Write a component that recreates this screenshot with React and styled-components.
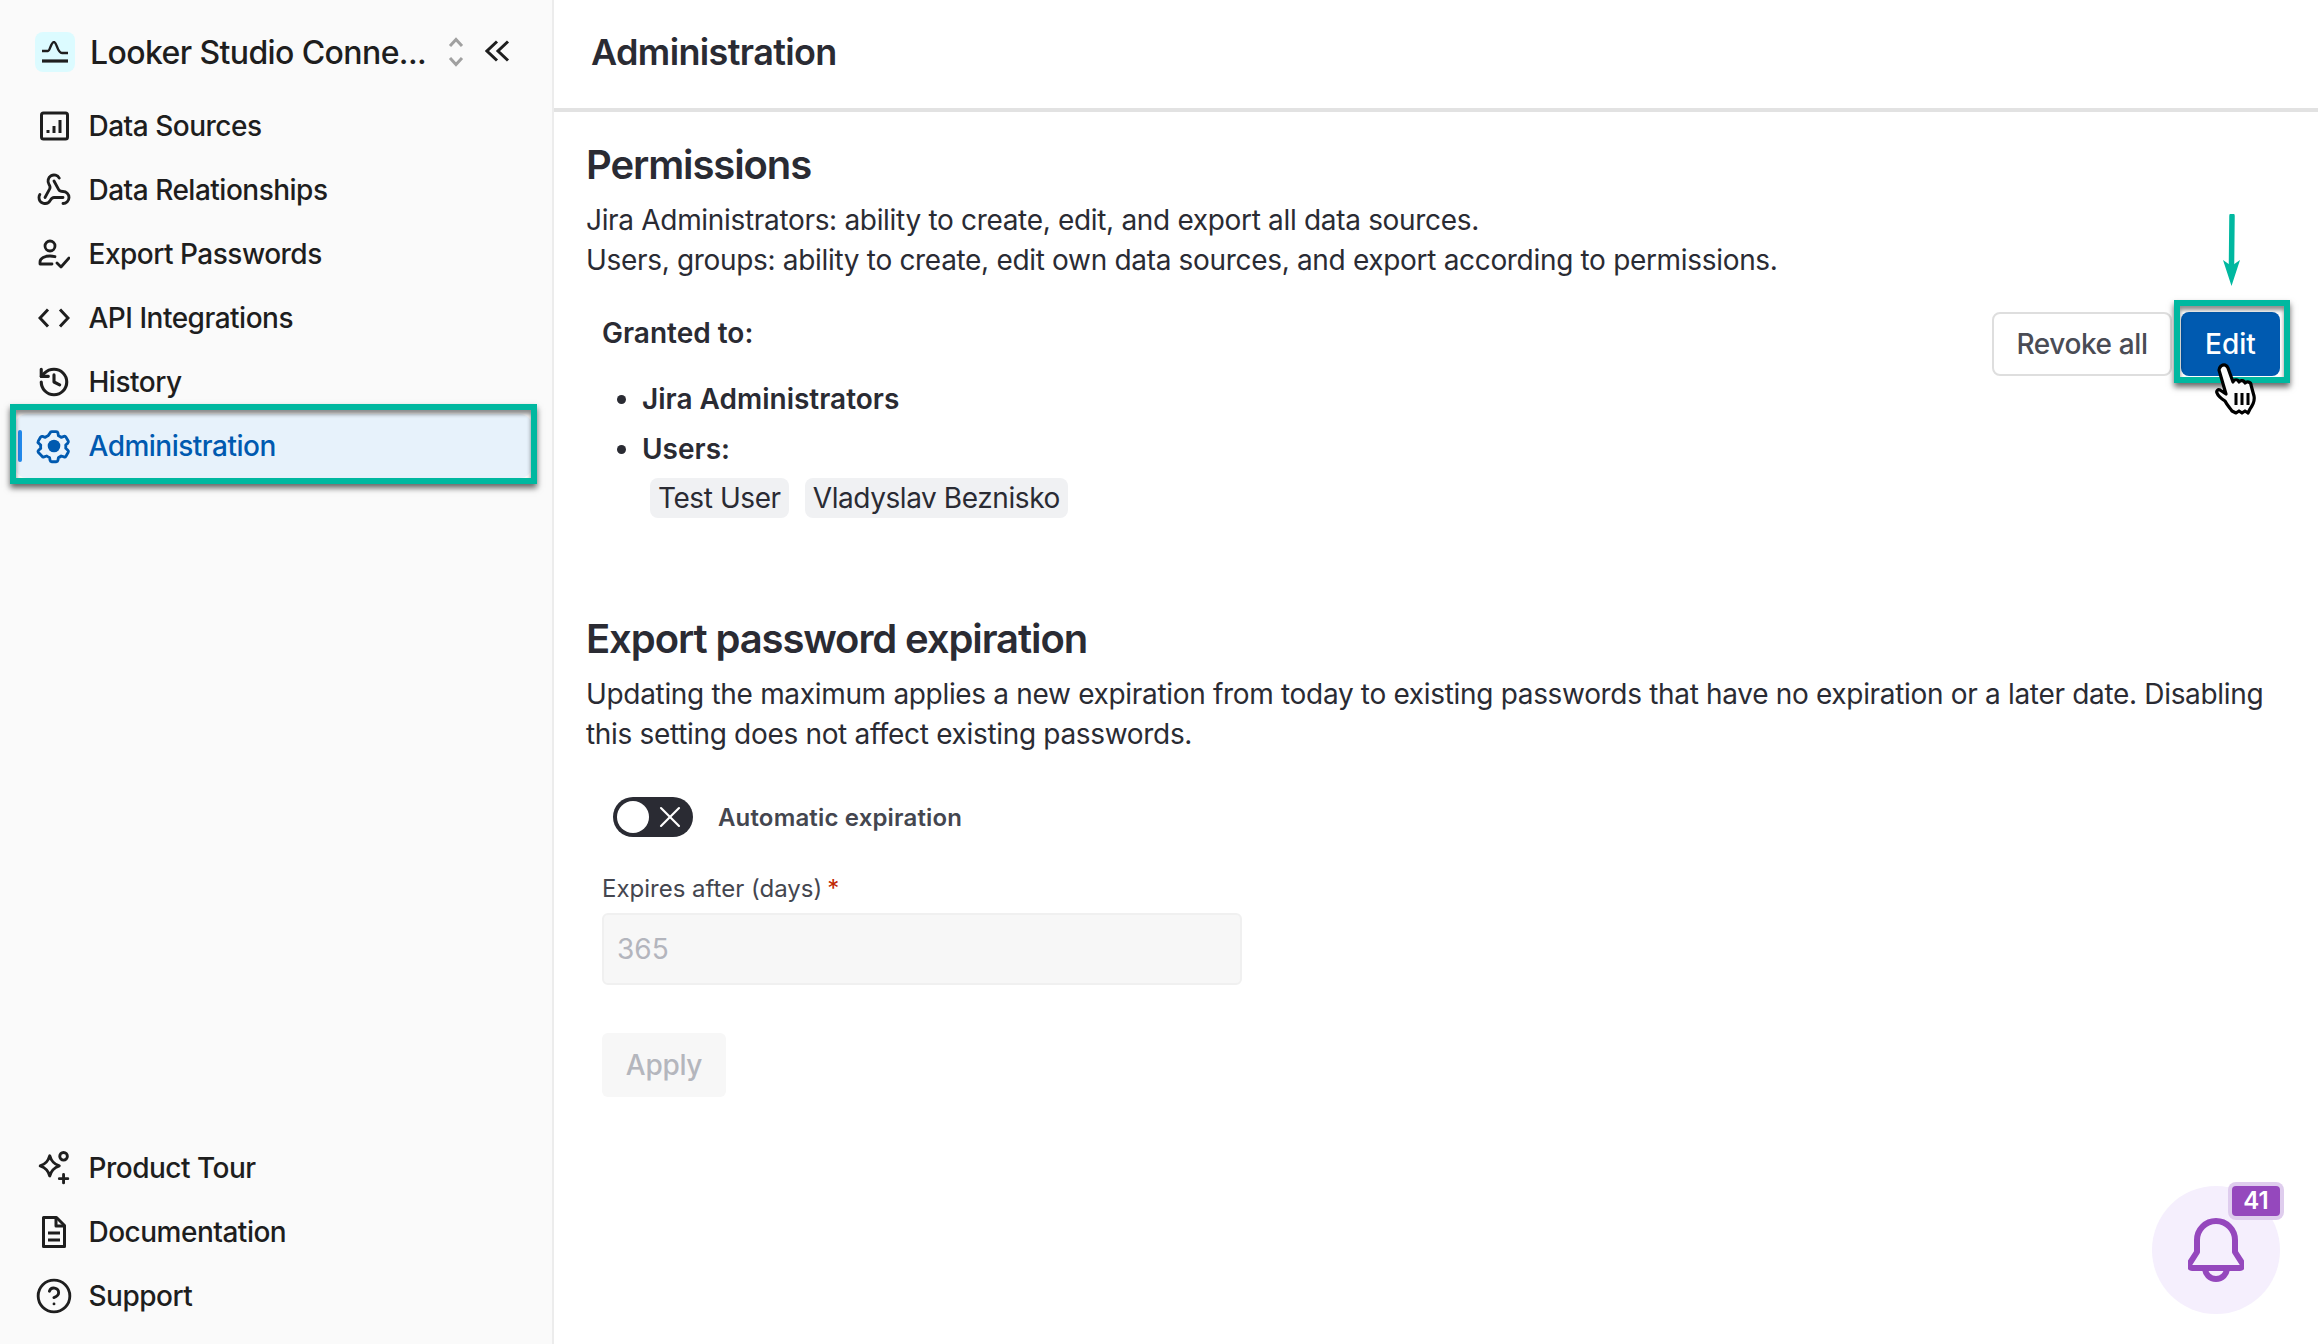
import React from 'react';
import styled, { createGlobalStyle } from 'styled-components';
import { Webhook, History, CircleHelp, X } from 'lucide-react';

const Global = createGlobalStyle`
  html, body, #root { margin: 0; height: 100%; }
  body { font-family: Inter, "Liberation Sans", sans-serif; background: #fff; overflow: hidden; }
  * { box-sizing: border-box; }
`;
const Page = styled.div`display: flex; height: 100vh; position: relative;`;
const Sidebar = styled.aside`
  width: 554px; flex: none; background: #fafafa; border-right: 2px solid #ececec;
  display: flex; flex-direction: column; padding-top: 32px; padding-bottom: 16px;
`;
const Head = styled.div`display: flex; align-items: center; height: 40px; padding-left: 35px; margin-bottom: 22px;`;
const Logo = styled.span`
  width: 40px; height: 40px; border-radius: 8px; background: #dcfbff; display: flex; align-items: center; justify-content: center; flex: none;
`;
const Project = styled.span`font-size: 32px; font-weight: 450; letter-spacing: -0.6px; color: #1e1e1e; margin-left: 15px; width: 358px; white-space: nowrap;`;
const Updown = styled.svg`flex: none; margin-right: 21px; color: #a0a0a0;`;
const Collapse = styled.svg`flex: none; color: #1e1e1e; margin-top: -2px;`;
const Nav = styled.nav`display: flex; flex-direction: column; padding: 0 20px 0 15px;`;
const BottomNav = styled(Nav)`margin-top: auto;`;
const Row = styled.div`
  height: 64px; display: flex; align-items: center; padding-left: 23px; gap: 18.500px; position: relative; font-size: 28px; font-weight: 450; letter-spacing: -0.5px; border-radius: 12px;
  color: ${p => (p.$active ? '#005ab0' : '#1e1e1e')};
  background: ${p => (p.$active ? '#e7f2fb' : 'transparent')};
`;
const ActiveBar = styled.span`position: absolute; left: 3px; top: 16px; width: 4px; height: 32px; background: #2188ea; border-radius: 2px;`;
const IconBox = styled.span`width: 32px; height: 32px; display: flex; align-items: center; justify-content: center; flex: none; svg { flex: none; }`;
const Highlight = styled.span`
  position: absolute; inset: ${p => p.$inset}; border: 6px solid #00b8a0; box-shadow: 0 4px 6px rgba(0,0,0,.6), inset 0 4px 4px rgba(0,0,0,.45); pointer-events: none; z-index: 2;
`;
const Main = styled.main`flex: 1; min-width: 0; display: flex; flex-direction: column;`;
const Top = styled.header`height: 112px; border-bottom: 4px solid #e2e2e2; padding-left: 37px; display: flex; align-items: center; padding-bottom: 5px;`;
const Title = styled.h1`margin: 0; font-size: 36px; font-weight: 600; letter-spacing: -0.63px; color: #2a2b33;`;
const Content = styled.div`padding: 28px 38px 0 32px; color: #2a2b33;`;
const H2 = styled.h2`margin: 0; font-size: 40px; line-height: 50px; font-weight: 600; color: #2a2b33; letter-spacing: -1.1px;`;
const Para = styled.p`margin: 10px 0 0; font-size: 28px; line-height: 40px; letter-spacing: -0.32px;`;
const Granted = styled.div`display: flex; justify-content: space-between; padding-left: 16px; margin-top: 33px; height: 301px;`;
const Label = styled.div`font-size: 28px; font-weight: 600; line-height: 40px;`;
const List = styled.ul`margin: 26px 0 0; padding: 0 0 0 40px; font-size: 28px; font-weight: 600;`;
const Item = styled.li`line-height: 40px; margin-bottom: 10px;`;
const Chips = styled.div`display: flex; gap: 16px; margin: -1px 0 0 48px;`;
const Chip = styled.span`height: 40px; padding: 0 8px; background: #f0f1f3; border-radius: 8px; font-size: 28px; line-height: 40px; letter-spacing: -0.42px;`;
const Actions = styled.div`display: flex; gap: 9px; margin-top: -1px;`;
const Revoke = styled.button`
  width: 180px; height: 64px; background: #fff; border: 2px solid #dedede; border-radius: 8px; font: 500 28px Inter, sans-serif; letter-spacing: -0.4px; color: #4a4c55; padding: 0;
`;
const EditWrap = styled.div`position: relative; width: 99px; height: 64px;`;
const Edit = styled.button`
  width: 99px; height: 64px; background: #005ab0; border: 0; border-radius: 8px; font: 500 28px Inter, sans-serif; color: #fff; padding: 0;
`;
const Arrow = styled.svg`position: absolute; left: 41px; top: -98px; z-index: 3;`;
const Hand = styled.svg`position: absolute; left: 33px; top: 51px; z-index: 4;`;
const Toggle = styled.div`display: flex; align-items: center; gap: 25px; margin: 43px 0 0 27px;`;
const Switch = styled.span`width: 80px; height: 40px; border-radius: 20px; background: #2a2b33; display: flex; align-items: center; padding-left: 4px; gap: 3px; color: #fff;`;
const Knob = styled.span`width: 32px; height: 32px; border-radius: 50%; background: #fff;`;
const ToggleLabel = styled.span`font-size: 24px; font-weight: 600; letter-spacing: 0.16px; color: #44464f;`;
const Form = styled.div`padding-left: 16px; margin-top: 32px;`;
const FieldLabel = styled.div`font-size: 24px; line-height: 40px; color: #44464f; display: flex; gap: 5px;`;
const Required = styled.span`color: #bf2600;`;
const Input = styled.div`
  width: 640px; height: 72px; margin-top: 4px; background: #f7f7f7; border: 2px solid #f0f0f0; border-radius: 6px; font-size: 28px; color: #b3b5bd; display: flex; align-items: center; padding-left: 13px;
`;
const Apply = styled.button`
  display: block; margin-top: 48px; width: 124px; height: 64px; background: #f7f7f7; border: 0; border-radius: 6px; font: 500 28px Inter, sans-serif; letter-spacing: -0.3px; color: #b4b6bd; padding: 0;
`;
const Bell = styled.div`
  position: absolute; right: 38px; bottom: 30px; width: 128px; height: 128px; border-radius: 50%; background: #f5effd; display: flex; align-items: center; justify-content: center;
`;
const Badge = styled.span`
  position: absolute; right: 0; top: 0; width: 48px; height: 30px; background: #9548bd; color: #fff; border-radius: 4px; font-size: 24px; font-weight: 600; line-height: 30px; text-align: center; box-shadow: 0 0 0 4px #dfcdee;
`;

const S = { fill: 'none', stroke: 'currentColor', strokeWidth: 3, strokeLinecap: 'round', strokeLinejoin: 'round' };
const Bars = () => (
  <svg width="32" height="32" viewBox="0 0 32 32" {...S}>
    <rect x="3.500" y="3" width="26" height="26" rx="2" />
    <path d="M10 23v-3M16 23v-7M22 23V10" strokeLinecap="butt" strokeWidth="3" />
  </svg>
);
const UserCheck = () => (
  <svg width="32" height="32" viewBox="0 0 32 32" {...S} strokeWidth="2.800">
    <circle cx="12" cy="8" r="5" />
    <path d="M2 26v-2c0-4 5-6 10-6 2 0 3 .2 5 .7M2 26h12" />
    <path d="M19 25l4 4 8-9" />
  </svg>
);
const Angles = () => (
  <svg width="32" height="20" viewBox="0 0 32 20" {...S} strokeLinecap="butt" strokeLinejoin="miter">
    <path d="M10 1.500L2 10l8 8.500M22 1.500l8 8.500-8 8.500" />
  </svg>
);
const Gear = () => (
  <svg width="40" height="40" viewBox="0 0 24 24" fill="none" stroke="currentColor" strokeWidth="1.700" strokeLinecap="round" strokeLinejoin="round">
    <path d="M9.67 4.140a1 1 0 0 1 .98-.8h2.700a1 1 0 0 1 .98.8l.34 1.700c.6.25 1.160.57 1.670.96l1.640-.56a1 1 0 0 1 1.190.45l1.350 2.340a1 1 0 0 1-.2 1.250l-1.300 1.150a7 7 0 0 1 0 1.940l1.300 1.150a1 1 0 0 1 .2 1.250l-1.350 2.340a1 1 0 0 1-1.190.45l-1.640-.56c-.51.39-1.070.71-1.670.96l-.34 1.700a1 1 0 0 1-.98.8h-2.700a1 1 0 0 1-.98-.8l-.34-1.700a7 7 0 0 1-1.670-.96l-1.640.56a1 1 0 0 1-1.190-.45L2.540 15.800a1 1 0 0 1 .2-1.250l1.300-1.150a7 7 0 0 1 0-1.940l-1.300-1.150a1 1 0 0 1-.2-1.250l1.350-2.340a1 1 0 0 1 1.190-.45l1.640.56c.51-.39 1.070-.71 1.670-.96z" />
    <circle cx="12" cy="12" r="3.800" fill="currentColor" stroke="none" />
  </svg>
);
const Sparkle = () => (
  <svg width="34" height="34" viewBox="0 0 32 32" {...S} strokeWidth="2.700">
    <path d="M13 4c1.500 5 3.500 7.500 9 9.500-5.500 2-7.500 4.500-9 9.500-1.500-5-3.500-7.500-9-9.500 5.500-2 7.500-4.500 9-9.500z" transform="translate(-1 .5)" />
    <circle cx="25" cy="5" r="3.600" />
    <path d="M25 22v8M21 26h8" />
  </svg>
);
const Doc = () => (
  <svg width="32" height="34" viewBox="0 0 32 34" {...S} strokeLinecap="butt">
    <path d="M5.500 2.500h13l8 8v21h-21z" />
    <path d="M10 18h12M10 25h12" strokeWidth="3" />
    <path d="M18 2.500v8.500h8" />
  </svg>
);
const HandIcon = () => (
  <Hand width="44" height="52" viewBox="0 0 44 52">
    <path d="M7 3c3-2 6-1 7 2l5 14c1-3 5-3 6 0 1-2 5-2 6 1 2-2 6-1 6 2l3 11c1 5-1 9-4 13l-2 4-3-2-3 2-3-2-3 2-4-2c-2-3-5-6-7-10-3-2-7-5-8-8-1-2 1-4 3-3l6 4L5 7c0-2 1-3 2-4z" fill="#fbfbfb" stroke="#000" strokeWidth="3.200" strokeLinejoin="round" />
    <path d="M22 30v12M28 30v12M34 30v12" stroke="#000" strokeWidth="3" />
  </Hand>
);

export default function App() {
  return (
    <Page>
      <Global />
      <Sidebar>
        <Head>
          <Logo>
            <svg width="28" height="22" viewBox="0 0 28 22" fill="none" stroke="#1e1e1e">
              <path d="M1 10h6c2 0 3-9 6-9 3 0 3 11 8 11h6" strokeWidth="2.400" />
              <path d="M1 20h26" strokeWidth="3.200" />
            </svg>
          </Logo>
          <Project>Looker Studio Conne...</Project>
          <Updown width="16" height="30" viewBox="0 0 16 30" fill="none" stroke="currentColor" strokeWidth="3">
            <path d="M2 9l6-6.500L14 9M2 21l6 6.500 6-6.500" />
          </Updown>
          <Collapse width="25" height="22" viewBox="0 0 25 22" fill="none" stroke="currentColor" strokeWidth="3">
            <path d="M12 1.500L2 11l10 9.500M23 1.500L13 11l10 9.500" />
          </Collapse>
        </Head>
        <Nav>
          <Row><IconBox><Bars /></IconBox>Data Sources</Row>
          <Row><IconBox><Webhook size={36} strokeWidth={1.900} /></IconBox>Data Relationships</Row>
          <Row><IconBox><UserCheck /></IconBox>Export Passwords</Row>
          <Row><IconBox><Angles /></IconBox>API Integrations</Row>
          <Row><IconBox><History size={34} strokeWidth={2.200} /></IconBox>History</Row>
          <Row $active>
            <ActiveBar />
            <IconBox><Gear /></IconBox>
            Administration
            <Highlight $inset="-10px -5px -6px -5px" />
          </Row>
        </Nav>
        <BottomNav>
          <Row><IconBox><Sparkle /></IconBox>Product Tour</Row>
          <Row><IconBox><Doc /></IconBox>Documentation</Row>
          <Row><IconBox><CircleHelp size={38} strokeWidth={1.800} /></IconBox>Support</Row>
        </BottomNav>
      </Sidebar>
      <Main>
        <Top><Title>Administration</Title></Top>
        <Content>
          <H2>Permissions</H2>
          <Para>
            Jira Administrators: ability to create, edit, and export all data sources.<br />
            Users, groups: ability to create, edit own data sources, and export according to permissions.
          </Para>
          <Granted>
            <div>
              <Label>Granted to:</Label>
              <List>
                <Item>Jira Administrators</Item>
                <Item>Users:</Item>
              </List>
              <Chips><Chip>Test User</Chip><Chip>Vladyslav Beznisko</Chip></Chips>
            </div>
            <Actions>
              <Revoke>Revoke all</Revoke>
              <EditWrap>
                <Edit>Edit</Edit>
                <Highlight $inset="-12px -10px -7px -7px" />
                <Arrow width="20" height="74" viewBox="0 0 20 74">
                  <path d="M10 2 L9.500 50" stroke="#00b8a0" strokeWidth="5.500" strokeLinecap="round" />
                  <path d="M1 46 L9.500 52 L18 46 L9.500 72 Z" fill="#00b8a0" />
                </Arrow>
                <HandIcon />
              </EditWrap>
            </Actions>
          </Granted>
          <H2>Export password expiration</H2>
          <Para>
            Updating the maximum applies a new expiration from today to existing passwords that have no expiration or a later date. Disabling this setting does not affect existing passwords.
          </Para>
          <Toggle>
            <Switch><Knob /><X size={36} strokeWidth={1.400} /></Switch>
            <ToggleLabel>Automatic expiration</ToggleLabel>
          </Toggle>
          <Form>
            <FieldLabel>Expires after (days)<Required>*</Required></FieldLabel>
            <Input>365</Input>
            <Apply>Apply</Apply>
          </Form>
        </Content>
      </Main>
      <Bell>
        <svg width="56" height="64" viewBox="0 0 56 64" fill="none" stroke="#9548bd" strokeWidth="6" strokeLinejoin="round">
          <path d="M9 22a19 19 0 0 1 38 0v12l7 11a3 3 0 0 1-2.500 5H4.500a3 3 0 0 1-2.500-5l7-11z" />
          <path d="M17 50a11 11 0 0 0 22 0" />
        </svg>
        <Badge>41</Badge>
      </Bell>
    </Page>
  );
}
